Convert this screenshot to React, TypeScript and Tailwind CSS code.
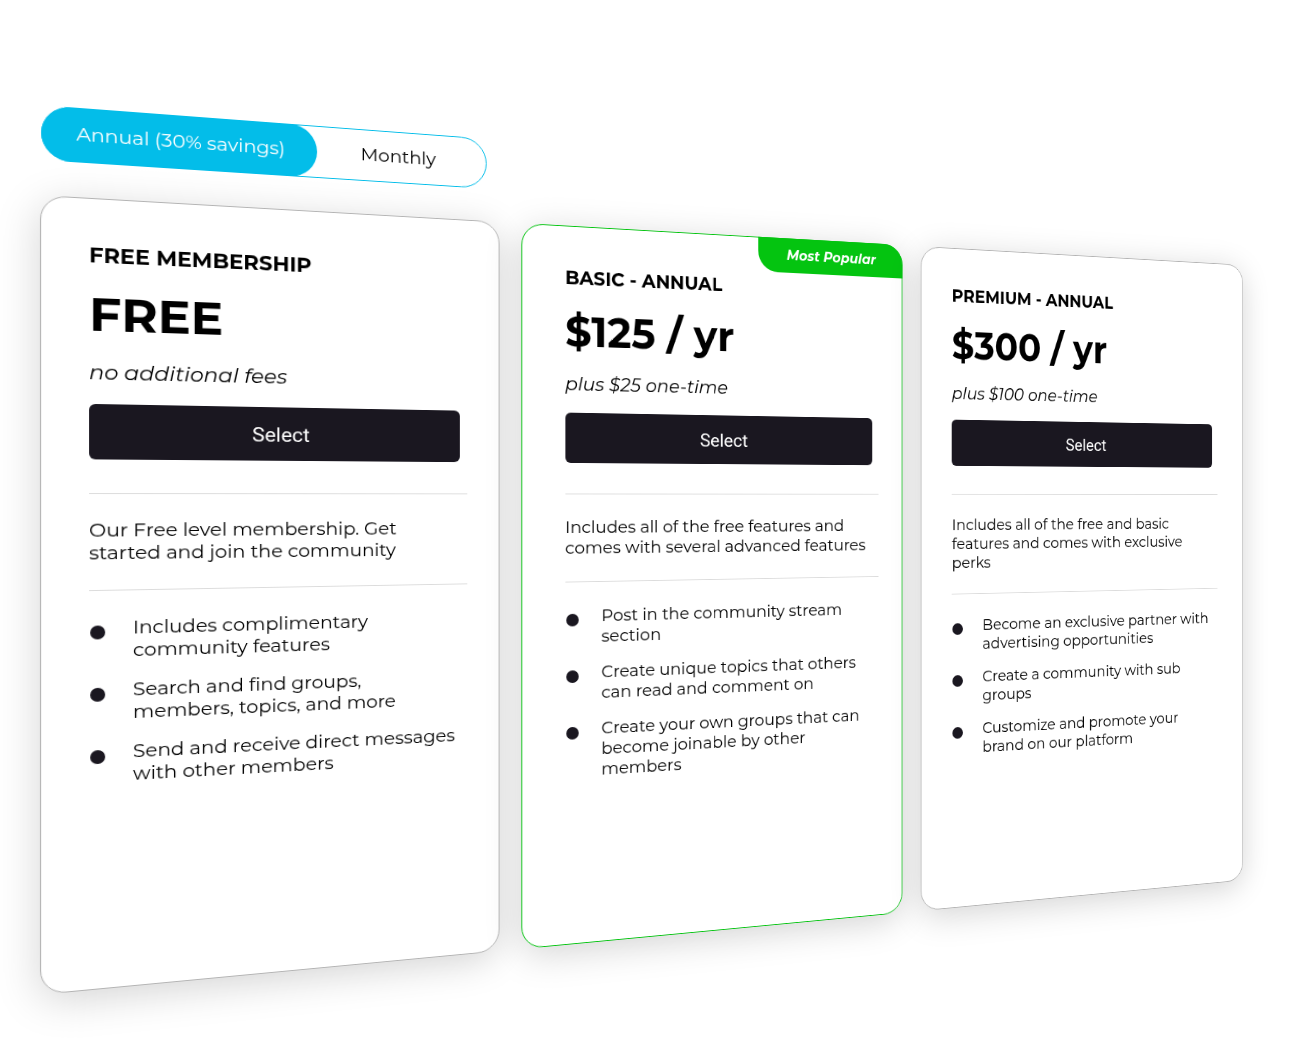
import { useState } from "react";

interface Plan {
  id: string;
  name: string;
  price: string;
  fees: string;
  description: string;
  features: string[];
  padding: string;
  popular?: boolean;
}

const plans: Plan[] = [
  {
    id: "free",
    name: "FREE MEMBERSHIP",
    price: "FREE",
    fees: "no additional fees",
    description: "Our Free level membership. Get started and join the community",
    features: [
      "Includes complimentary community features",
      "Search and find groups, members, topics, and more",
      "Send and receive direct messages with other members",
    ],
    padding: "pl-11 pr-[34px]",
  },
  {
    id: "basic",
    name: "BASIC - ANNUAL",
    price: "$125 / yr",
    fees: "plus $25 one-time",
    description:
      "Includes all of the free features and comes with several advanced features",
    features: [
      "Post in the community stream section",
      "Create unique topics that others can read and comment on",
      "Create your own groups that can become joinable by other members",
    ],
    padding: "pl-12 pr-[30px]",
    popular: true,
  },
  {
    id: "premium",
    name: "PREMIUM - ANNUAL",
    price: "$300 / yr",
    fees: "plus $100 one-time",
    description:
      "Includes all of the free and basic features and comes with exclusive perks",
    features: [
      "Become an exclusive partner with advertising opportunities",
      "Create a community with sub groups",
      "Customize and promote your brand on our platform",
    ],
    padding: "pl-10 pr-[38px]",
  },
];

type Billing = "annual" | "monthly";

function BillingToggle({
  value,
  onChange,
}: {
  value: Billing;
  onChange: (value: Billing) => void;
}) {
  const getStateColor = (billing: Billing) =>
    value === billing ? "bg-[#03bde9] text-white" : "text-black";

  return (
    <div
      role="group"
      aria-label="Billing period"
      className="ml-px flex h-[55px] w-[443px] rounded-full border border-[#03bde9] bg-white text-[19px] shadow-[0_0_4px_rgba(255,255,255,1)]"
    >
      <button
        type="button"
        aria-pressed={value === "annual"}
        onClick={() => onChange("annual")}
        className={`-m-px w-[265px] rounded-full ${getStateColor("annual")}`}
      >
        Annual (30% savings)
      </button>
      <button
        type="button"
        aria-pressed={value === "monthly"}
        onClick={() => onChange("monthly")}
        className={`-my-px flex-1 rounded-full pr-2 ${getStateColor("monthly")}`}
      >
        Monthly
      </button>
    </div>
  );
}

function PlanCard({ plan }: { plan: Plan }) {
  return (
    <section
      className={`relative min-h-[800px] rounded-3xl border bg-white pt-[43px] pb-10 shadow-[0_8px_40px_rgba(0,0,0,0.17)] ${plan.padding} ${plan.popular ? "border-[#04c410]" : "border-[#b4b4b4]"}`}
    >
      {plan.popular && (
        <span className="absolute -top-px -right-px flex h-10 w-[182px] items-center justify-center rounded-tr-3xl rounded-bl-3xl bg-[#04c410] text-[16px] font-bold text-white italic">
          Most Popular
        </span>
      )}
      <h2 className="text-[21px] leading-7 font-bold">{plan.name}</h2>
      <p className="mt-[18px] text-[47px] leading-[56px] font-bold">
        {plan.price}
      </p>
      <p className="mt-4 text-[21px] leading-7 italic">{plan.fees}</p>
      <div className="mt-[18px] pr-2">
        <button
          type="button"
          aria-label={`Select ${plan.name}`}
          className="h-14 w-full rounded-md bg-[#1a1720] pt-[3px] font-[Roboto,sans-serif] text-[21px] text-white"
        >
          Select
        </button>
      </div>
      <hr className="mt-[34px] border-[#dcdcdc]" />
      <p className="mt-[25px] pr-2 text-[19px] leading-[23px]">
        {plan.description}
      </p>
      <hr className="mt-[26px] border-[#dcdcdc]" />
      <ul className="mt-[26px] space-y-[17px] pr-[9px] text-[19px] leading-[23px]">
        {plan.features.map((feature) => (
          <li key={feature} className="flex gap-[26px] px-px">
            <span className="mt-[9px] size-[14px] shrink-0 rounded-full bg-[#1a1720]" />
            <span>{feature}</span>
          </li>
        ))}
      </ul>
    </section>
  );
}

export default function App() {
  const [billing, setBilling] = useState<Billing>("annual");

  return (
    <main className="min-h-screen overflow-hidden bg-white pt-[65px] pb-[51px] pl-10 font-[Montserrat,Inter,sans-serif] text-black perspective-[1228px] perspective-origin-[677px_498px]">
      <div className="w-[calc(113%+4px)] origin-left rotate-y-[15deg] pt-10">
        <BillingToggle value={billing} onChange={setBilling} />
        <div className="mt-[35px] grid grid-cols-3 gap-6">
          {plans.map((plan) => (
            <PlanCard key={plan.id} plan={plan} />
          ))}
        </div>
      </div>
    </main>
  );
}
